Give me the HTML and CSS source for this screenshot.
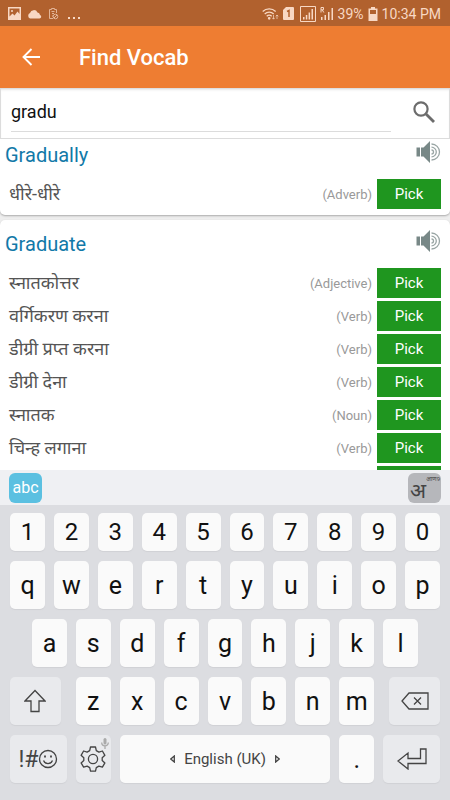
FILE: index.html
```html
<!DOCTYPE html>
<html lang="en">
<head>
<meta charset="utf-8">
<meta name="viewport" content="width=device-width, initial-scale=1">
<title>Find Vocab</title>
<link rel="stylesheet" href="styles.css">
</head>
<body>
<svg class="defs" aria-hidden="true">
  <symbol id="speaker" viewBox="0 0 25 24">
    <path d="M.5 7.500H4v9H.5zM5 7.500h2.500L14 1v22l-6.500-6.500H5z" fill="#788887"/>
    <g fill="none" stroke="#9aa6a5" stroke-width="1.300">
      <path d="M15.500 10a2 2 0 0 1 0 4"/>
      <path d="M15.500 7.200a4.800 4.800 0 0 1 0 9.600"/>
      <path d="M15.500 4a8 8 0 0 1 0 16"/>
    </g>
  </symbol>
</svg>
<div class="app">
  <div class="status">
    <div class="status-group">
      <svg width="13" height="13" viewBox="0 0 13 13"><path fill-rule="evenodd" fill="currentColor" d="M0 0h13v13H0zM1.500 1.500v8l3-3 2 2 3-4 2 2.500V1.500z"/><circle cx="4" cy="4" r="1" fill="currentColor"/></svg>
      <svg width="15" height="10" viewBox="0 0 15 10"><path fill="currentColor" d="M3 9.500a3 3 0 0 1 0-5.500 4 4 0 0 1 7.500-.5A3 3 0 0 1 13 6a1.800 1.800 0 0 1-.5 3.500z"/></svg>
      <svg class="dim" width="11" height="13" viewBox="0 0 11 13" fill="none" stroke="currentColor"><path d="M5 11.500H1.500v-9h2v-1h3v1h2V6M4 6.500h2M3.500 4.500h3M4 9h1"/><circle cx="7.500" cy="9.500" r="2.300"/><path d="M6 11l3-3"/></svg>
      <svg class="dots" width="12" height="13" viewBox="0 0 12 13" fill="currentColor"><path d="M0 10h2v2H0zM5 10h2v2H5zM10 10h2v2h-2z"/></svg>
    </div>
    <div class="status-group status-right">
      <svg width="17" height="14" viewBox="0 0 17 14" fill="none" stroke="currentColor" stroke-width="1.300"><path d="M.7 4.500a9.500 9.500 0 0 1 13 0M2.700 7a6.500 6.500 0 0 1 9 0M4.700 9.300a3.600 3.600 0 0 1 5 0"/><circle cx="7.200" cy="11.300" r=".7" fill="currentColor"/><path class="dim" d="M11.500 8v4M10.200 10.800l1.300 1.400 1.300-1.400M15 12V8M13.800 9.300 15 8l1.300 1.300" stroke-width="1"/></svg>
      <svg width="11" height="13" viewBox="0 0 11 13"><path fill="currentColor" d="M3 0h7a1 1 0 0 1 1 1v11a1 1 0 0 1-1 1H1a1 1 0 0 1-1-1V3z"/><path d="M4 4.500 6 3.500V10" fill="none" stroke="#b1612e" stroke-width="1.500"/></svg>
      <svg class="sim" width="16" height="16" viewBox="0 0 16 16"><path fill="none" stroke="currentColor" d="M.5.5h15v15H.5z"/><path fill="currentColor" d="M3 11h1.500v2.500H3zM5.800 9h1.500v4.500H5.800zM8.600 6.500h1.500v7H8.600zM11.500 3H13v10.500h-1.500z"/></svg>
      <svg width="14" height="14" viewBox="0 0 14 14"><path fill="currentColor" d="M1 10h1.500v3H1zM4.500 8H6v5H4.500zM8 5h1.500v8H8zM11.500 1H13v12h-1.500z"/><path fill="none" stroke="currentColor" stroke-width="1" d="M1 5.500V.5h2.500v2.300H1M2.200 2.800 3.800 5.500"/></svg>
      <span>39%</span>
      <svg width="10" height="14" viewBox="0 0 10 14"><path fill-rule="evenodd" fill="currentColor" d="M3 0h4v1.500h2.500V14h-9V1.500H3zM2 3v4h6V3z"/></svg>
      <span>10:34 PM</span>
    </div>
  </div>
  <header class="header">
    <button class="icon-button" aria-label="Back"><svg width="18" height="18" viewBox="0 0 18 18" fill="none" stroke="#fff" stroke-width="1.900"><path d="M18 9H1.500M9.500 1 1.500 9l8 8"/></svg></button>
    <h1>Find Vocab</h1>
  </header>
  <form class="search">
    <input type="text" value="gradu" aria-label="Search word">
    <button type="button" class="icon-button" aria-label="Search"><svg width="22" height="22" viewBox="0 0 22 22" fill="none" stroke="#6c6c6c"><circle cx="8" cy="8" r="6.600" stroke-width="2.200"/><path d="m13 13 8 8" stroke-width="2.800"/></svg></button>
  </form>
  <main class="results">
    <section class="card">
      <div class="card-head"><h2>Gradually</h2><button class="icon-button listen" aria-label="Listen to Gradually"><svg width="25" height="24"><use href="#speaker"/></svg></button></div>
      <ul>
        <li><span class="meaning" lang="hi">धीरे-धीरे</span><span class="part">(Adverb)</span><button class="pick">Pick</button></li>
      </ul>
    </section>
    <section class="card">
      <div class="card-head"><h2>Graduate</h2><button class="icon-button listen" aria-label="Listen to Graduate"><svg width="25" height="24"><use href="#speaker"/></svg></button></div>
      <ul>
        <li><span class="meaning" lang="hi">स्नातकोत्तर</span><span class="part">(Adjective)</span><button class="pick">Pick</button></li>
        <li><span class="meaning" lang="hi">वर्गिकरण करना</span><span class="part">(Verb)</span><button class="pick">Pick</button></li>
        <li><span class="meaning" lang="hi">डीग्री प्रप्त करना</span><span class="part">(Verb)</span><button class="pick">Pick</button></li>
        <li><span class="meaning" lang="hi">डीग्री देना</span><span class="part">(Verb)</span><button class="pick">Pick</button></li>
        <li><span class="meaning" lang="hi">स्नातक</span><span class="part">(Noun)</span><button class="pick">Pick</button></li>
        <li><span class="meaning" lang="hi">चिन्ह लगाना</span><span class="part">(Verb)</span><button class="pick">Pick</button></li>
        <li><span class="meaning"></span><span class="part"></span><button class="pick" aria-label="Pick"></button></li>
      </ul>
    </section>
  </main>
  <div class="keyboard">
    <div class="modes">
      <button class="mode active">abc</button>
      <button class="mode hindi" lang="hi">अ<small>आण9</small></button>
    </div>
    <div class="keys">
      <div class="row digits"><button>1</button><button>2</button><button>3</button><button>4</button><button>5</button><button>6</button><button>7</button><button>8</button><button>9</button><button>0</button></div>
      <div class="row"><button>q</button><button>w</button><button>e</button><button>r</button><button>t</button><button>y</button><button>u</button><button>i</button><button>o</button><button>p</button></div>
      <div class="row"><button>a</button><button>s</button><button>d</button><button>f</button><button>g</button><button>h</button><button>j</button><button>k</button><button>l</button></div>
      <div class="row spread">
        <button class="fn shift" aria-label="Shift"><svg width="22" height="24" viewBox="0 0 22 24"><path d="M11 1.500 1 12h6v10.500h8V12h6z"/></svg></button>
        <div class="row"><button>z</button><button>x</button><button>c</button><button>v</button><button>b</button><button>n</button><button>m</button></div>
        <button class="fn shift" aria-label="Backspace"><svg width="28" height="18" viewBox="0 0 28 18"><path d="M8 1h19v16H8L1 9zM13 5.500l7 7M20 5.500l-7 7"/></svg></button>
      </div>
      <div class="row">
        <button class="fn wide" aria-label="Symbols and emoji">!#<svg width="20" height="20" viewBox="0 0 20 20"><circle cx="10" cy="10" r="8.500"/><path d="M5.500 11.500a4.800 4.800 0 0 0 9 0"/><path d="M7 6.500v2M13 6.500v2" stroke-width="1.800"/></svg></button>
        <button class="fn settings" aria-label="Keyboard settings"><svg width="26" height="26" viewBox="0 0 26 26"><path d="M10.500 1h5l.8 3.600 2.600 1.500 3.500-1.100 2.500 4.300-2.700 2.500v2.600l2.700 2.500-2.500 4.300-3.500-1.100-2.600 1.500-.8 3.600h-5l-.8-3.600-2.600-1.500L3.600 21.200l-2.500-4.300 2.700-2.500v-2.600L1.100 9.300 3.600 5l3.500 1.100 2.600-1.500z" stroke-linejoin="round"/><circle cx="13" cy="13" r="4.600"/></svg><svg class="mic" width="8" height="11" viewBox="0 0 8 11"><rect x="2.500" y="0" width="3" height="6.500" rx="1.500"/><path d="M.7 4.500c0 4.500 6.600 4.500 6.600 0M4 8v3"/></svg></button>
        <button class="space"><svg width="5" height="8" viewBox="0 0 5 8"><path d="M4.300 1v6L.8 4z"/></svg>English (UK)<svg width="5" height="8" viewBox="0 0 5 8"><path d="M.7 1v6l3.500-3z"/></svg></button>
        <button>.</button>
        <button class="fn wide" aria-label="Enter"><svg width="30" height="22" viewBox="0 0 30 22"><path d="M23.500 1H29v14.500H11V21L1 13l10-8v5.500h12.500z"/></svg></button>
      </div>
    </div>
  </div>
</div>
</body>
</html>
```
FILE: styles.css
```css
* {
  box-sizing: border-box;
}

body {
  margin: 0;
  font-family: Roboto, "Noto Sans Devanagari", "Noto Sans", sans-serif;
  background: #fff;
}

button {
  display: flex;
  align-items: center;
  justify-content: center;
  padding: 0;
  border: 0;
  background: none;
  font: inherit;
  color: inherit;
}

h1,
h2,
ul {
  margin: 0;
  padding: 0;
  list-style: none;
}

svg {
  flex: none;
}

.defs {
  position: absolute;
  width: 0;
  height: 0;
}

.app {
  display: flex;
  flex-direction: column;
  height: 100vh;
}

.status {
  display: flex;
  flex: none;
  align-items: center;
  justify-content: space-between;
  height: 26px;
  padding: 1px 9px 0 8px;
  background: #b1612e;
  color: #f8d8c4;
  font-size: 14px;
}

.status-group {
  display: flex;
  align-items: center;
  gap: 6px;
}

.status-right {
  gap: 4px;
}

.dim {
  opacity: 0.7;
}

.dots {
  margin-left: 3px;
}

.sim {
  margin-left: 2px;
}

.header {
  display: flex;
  flex: none;
  align-items: center;
  gap: 39px;
  height: 62px;
  padding: 0 22px;
  background: #ee7d32;
  color: #fff;
}

.header h1 {
  font-size: 22px;
  font-weight: 500;
}

.search {
  display: flex;
  flex: none;
  align-items: center;
  justify-content: space-between;
  gap: 22px;
  height: 51px;
  padding: 0 14px 2px 10px;
  border: 1px solid #dcdcdc;
  border-top: 0;
  background: #fff;
  box-shadow: inset 0 3px 3px -2px #ccc;
}

.search input {
  flex: 1;
  min-width: 0;
  height: 40px;
  padding: 0;
  border: 0;
  border-bottom: 1px solid #dcdcdc;
  background: none;
  font: 18px Roboto, sans-serif;
  color: #111;
  outline: 0;
}

.results {
  flex: 1;
  min-height: 0;
  overflow: hidden;
  background: #eee;
}

.card {
  margin-bottom: 5px;
  padding: 0 9px 6px;
  border-radius: 5px;
  background: #fff;
  box-shadow: 0 1px 2px #aaa;
}

.card:first-child {
  margin-top: -8px;
}

.card-head {
  display: flex;
  align-items: center;
  justify-content: space-between;
  height: 48px;
  margin-left: -4px;
}

.card h2 {
  font-size: 20px;
  font-weight: 400;
  color: #1279a8;
}

.listen {
  align-self: flex-start;
  margin-top: 9px;
}

.card ul {
  display: grid;
  gap: 3px;
}

.card li {
  display: flex;
  align-items: center;
  height: 30px;
}

.meaning {
  flex: 1;
  font-size: 18px;
  line-height: 30px;
  color: #555;
}

.part {
  margin-right: 5px;
  font-size: 13px;
  color: #999;
}

.pick {
  width: 64px;
  height: 30px;
  background: #1f961f;
  color: #fff;
  font-size: 15px;
}

.keyboard {
  flex: none;
  background: #dcdde1;
}

.modes {
  display: flex;
  align-items: center;
  justify-content: space-between;
  height: 35px;
  padding: 0 9px;
  background: #eff0f3;
}

.mode {
  position: relative;
  width: 33px;
  height: 30px;
  border-radius: 6px;
  font-size: 16px;
}

.mode.active {
  background: #5bc0e1;
  color: #fff;
}

.mode.hindi {
  justify-content: flex-start;
  padding: 6px 0 0 2px;
  background: #b6b7bb;
  color: #444;
  font-size: 21px;
  line-height: 24px;
}

.mode small {
  position: absolute;
  top: 2px;
  right: 1px;
  font-size: 6px;
  line-height: 8px;
}

.keys {
  --key: calc((100vw - 101px) / 10);
  display: grid;
  gap: 10px;
  padding: 8px 10px 17px;
}

.row {
  display: flex;
  justify-content: center;
  gap: 9px;
}

.row.spread {
  justify-content: space-between;
  gap: 0;
}

.keys button {
  position: relative;
  width: var(--key);
  height: 48px;
  border-radius: 5px;
  background: #fafafa;
  box-shadow: 0 1px 1px #d0d1d5;
  color: #111;
  font-size: 25px;
}

.keys .digits button {
  height: 38px;
  font-size: 24px;
}

.keys .fn {
  background: #e9eaed;
  color: #444;
}

.keys .shift {
  width: calc(var(--key) + 16px);
}

.keys .wide {
  flex: 1;
  font-size: 23px;
}

.keys .space {
  width: calc(var(--key) * 5 + 36px);
  gap: 9px;
  color: #444;
  font-size: 15px;
}

.keys svg {
  fill: none;
  stroke: #444;
  stroke-width: 1.3;
}

.keys .mic {
  position: absolute;
  top: 3px;
  right: 2px;
  stroke: #aaa;
}

.mic rect {
  fill: #aaa;
  stroke: none;
}
```
